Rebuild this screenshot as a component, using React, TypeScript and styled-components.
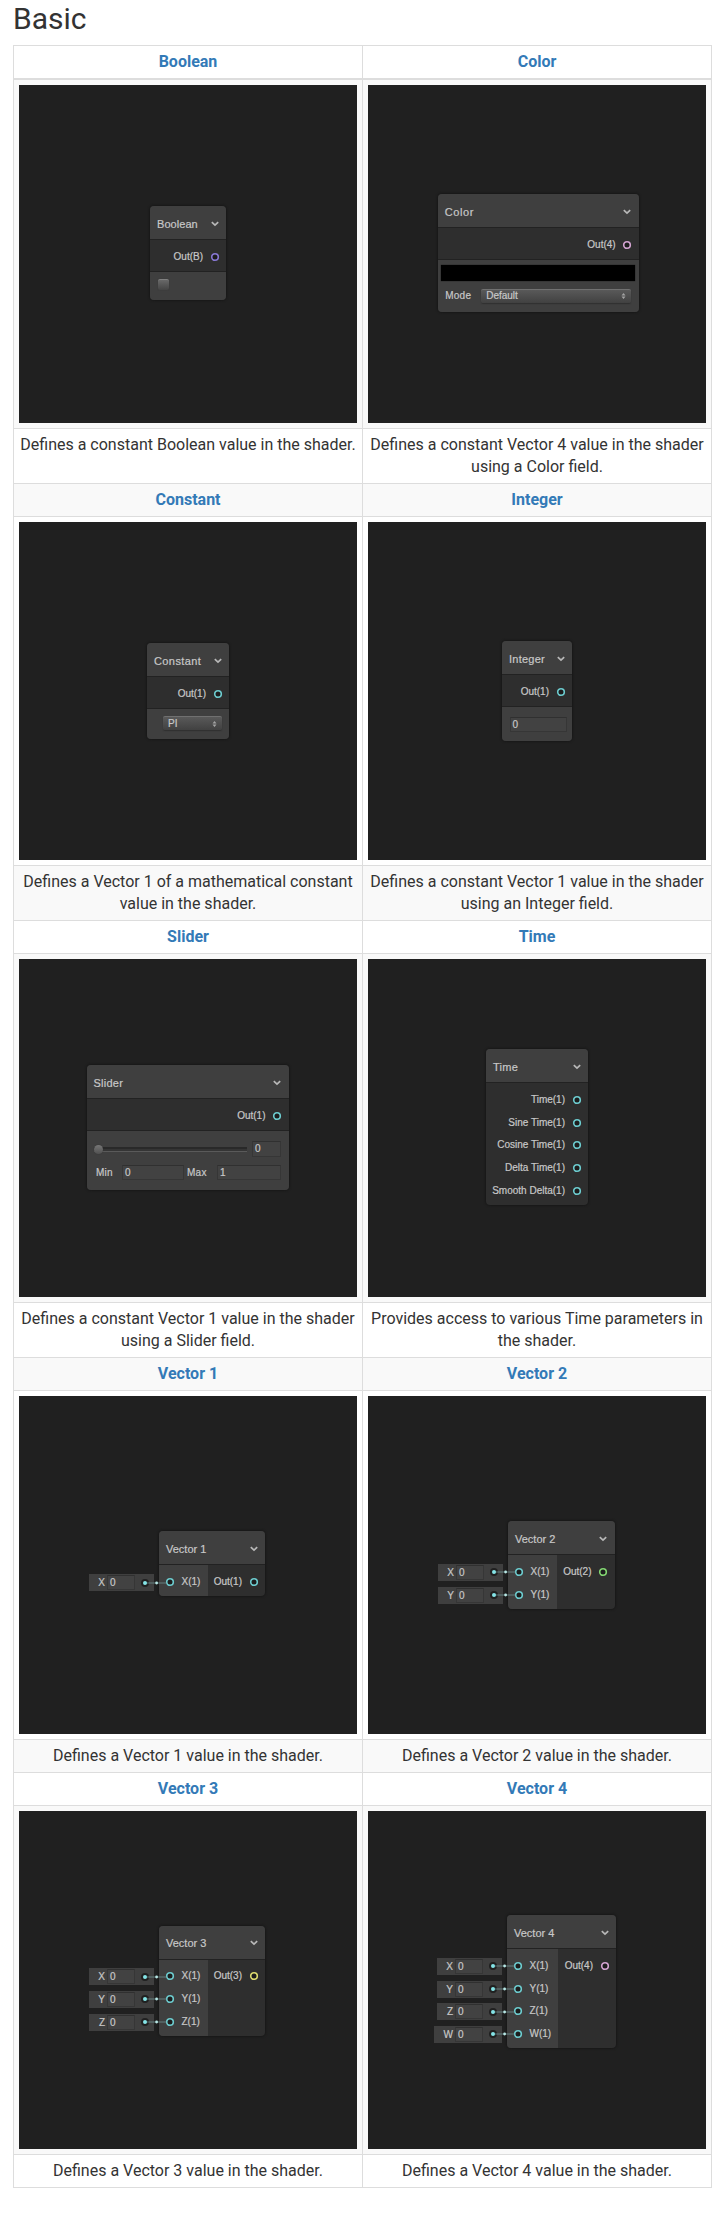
import React from "react";
import styled, { createGlobalStyle } from "styled-components";

const GlobalStyle = createGlobalStyle`
  * { box-sizing: border-box; }
  body {
    margin: 0;
    background: #fff;
    color: #333;
    font: 400 16px/22px Roboto, "Liberation Sans", sans-serif;
  }
`;

const Page = styled.main`
  width: 724px;
  height: 2214px;
  padding: 2px 12px 0 13px;
`;

const Heading = styled.h2`
  margin: 0 0 10px;
  font-size: 30px;
  font-weight: 400;
  line-height: 33px;
`;

const Gallery = styled.div`
  border: solid #ddd;
  border-width: 0 1px 1px 0;
`;

const Row = styled.div<{ $shaded?: boolean }>`
  display: grid;
  grid-template-columns: 1fr 1fr;
  background: ${(p) => (p.$shaded ? "#f9f9f9" : "#fff")};
`;

const Cell = styled.div<{ $thick?: boolean }>`
  padding: 5px;
  border-left: 1px solid #ddd;
  border-top: ${(p) => (p.$thick ? 2 : 1)}px solid #ddd;
  text-align: center;
`;

const NodeLink = styled.a`
  color: #337ab7;
  font-weight: 700;
  text-decoration: none;
`;

const Canvas = styled.div`
  position: relative;
  width: 338px;
  height: 338px;
  background: #202020;
  color: #c8c8c8;
  font: 10px/12px "Liberation Sans", Arial, sans-serif;
  -webkit-text-stroke: 0.2px #c8c8c8;
  text-align: left;
  white-space: nowrap;
`;

const Node = styled.div<{ $x: number; $y: number; $w: number }>`
  position: absolute;
  left: ${(p) => p.$x}px;
  top: ${(p) => p.$y}px;
  width: ${(p) => p.$w}px;
  border-radius: 4px;
  background: #2e2e2e;
  box-shadow: 0 0 2px 1px #181818;
`;

const NodeHeader = styled.div<{ $tracking: number }>`
  display: flex;
  align-items: center;
  justify-content: space-between;
  height: 34px;
  padding: 2px 7.5px 0 7px;
  border-bottom: 1px solid #222;
  border-radius: 4px 4px 0 0;
  background: #3f3f3f;
  font-size: 11px;
  letter-spacing: ${(p) => p.$tracking}px;
`;

const Ports = styled.div`
  display: flex;
`;

const Inputs = styled.div<{ $w: number }>`
  width: ${(p) => p.$w}px;
  padding: 5.3px 0 2.7px 7px;
  background: #3f3f3f;
  border-radius: 0 0 0 4px;
`;

const Outputs = styled.div`
  flex: 1;
  padding: 5.3px 7.5px 2.7px 0;
`;

const Port = styled.div<{ $out?: boolean }>`
  display: flex;
  align-items: center;
  justify-content: ${(p) => (p.$out ? "flex-end" : "flex-start")};
  gap: 7.5px;
  height: 22.7px;
`;

const RingArt = styled.svg`
  display: block;
  flex: none;
  width: 8px;
  height: 8px;
  overflow: visible;
`;

const Settings = styled.div<{ $h: number; $pad: string }>`
  height: ${(p) => p.$h}px;
  padding: ${(p) => p.$pad};
  border-top: 1px solid #222;
  border-radius: 0 0 4px 4px;
  background: #3f3f3f;
`;

const Line = styled.div<{ $gap?: number; $mt?: number; $pl?: number }>`
  display: flex;
  align-items: center;
  gap: ${(p) => p.$gap ?? 0}px;
  margin-top: ${(p) => p.$mt ?? 0}px;
  padding-left: ${(p) => p.$pl ?? 0}px;
`;

const FieldLabel = styled.span<{ $w: number }>`
  width: ${(p) => p.$w}px;
  letter-spacing: 0.25px;
`;

const Field = styled.div<{ $w: number; $h?: number }>`
  width: ${(p) => p.$w}px;
  height: ${(p) => p.$h ?? 15}px;
  padding-left: 2px;
  border: 1px solid #363636;
  border-top-color: #303030;
  background: #424242;
  line-height: 13px;
`;

const Checkbox = styled.div`
  width: 11px;
  height: 11px;
  border-radius: 2px;
  border-top: 1px solid #808080;
  background: linear-gradient(#686868, #444);
  box-shadow: 0 0 1px #333;
`;

const Swatch = styled.div`
  height: 16px;
  background: #000;
  box-shadow: 0 0 1px #111;
`;

const Select = styled.div<{ $w: number }>`
  display: flex;
  align-items: center;
  justify-content: space-between;
  width: ${(p) => p.$w}px;
  height: 14px;
  padding: 0 5px;
  border-top: 1px solid #707070;
  border-radius: 2px;
  background: linear-gradient(#595959, #414141);
  box-shadow: 0 1px 1px #303030;
`;

const Track = styled.div`
  display: flex;
  align-items: center;
  width: 153px;
  height: 5px;
  border: solid;
  border-width: 2px 0 1px;
  border-color: #292929 #000 #5a5a5a;
  background: #353535;
`;

const Thumb = styled.i`
  width: 9px;
  height: 9px;
  flex: none;
  border-radius: 50%;
  background: linear-gradient(#777, #505050);
  box-shadow: 0 0 1px #333;
`;

const Defaults = styled.div<{ $right: number }>`
  position: absolute;
  z-index: 1;
  top: 39.8px;
  right: ${(p) => p.$right}px;
  display: flex;
  flex-direction: column;
  align-items: flex-end;
`;

const DefaultSlot = styled.div`
  display: flex;
  align-items: center;
  height: 22.7px;
`;

const DefaultValue = styled.div<{ $w: number }>`
  display: flex;
  align-items: center;
  justify-content: flex-end;
  width: ${(p) => p.$w}px;
  height: 17px;
  background: #3f3f3f;
`;

const Letter = styled.span`
  margin-right: 2px;
  padding-top: 1px;
`;

const WireArt = styled.svg`
  display: block;
  flex: none;
  width: 14px;
  height: 10px;
  margin-left: 5px;
  overflow: visible;
`;

const Ring = ({ color }: { color: string }) => (
  <RingArt viewBox="0 0 8 8">
    <circle cx="4" cy="4" r="3.3" fill="#1d1d1d" stroke={color} strokeWidth="1.6" />
  </RingArt>
);

const Chevron = () => (
  <svg width="8" height="6" viewBox="0 0 8 6" fill="none">
    <path d="M0.8 1.2 4 4.2 7.2 1.2" stroke="#b8b8b8" strokeWidth="1.7" />
  </svg>
);

const UpDown = () => (
  <svg width="5" height="8" viewBox="0 0 5 8" fill="#a4a4a4">
    <path d="M2.5 1 4.5 3.6h-4zM2.5 7 .5 4.4h4z" />
  </svg>
);

const Wire = () => (
  <WireArt viewBox="0 0 14 10">
    <circle cx="5" cy="5" r="4" fill="#202020" />
    <path d="M5 5H26.5" stroke="#7aa3a3" strokeOpacity="0.65" />
    <circle cx="5" cy="5" r="2" fill="#84e4e7" />
    <circle cx="16.6" cy="5" r="1.4" fill="#b9e8e6" />
  </WireArt>
);

const CYAN = "#6dcdd0";

type NodeSpec = {
  name: string;
  text: string;
  x: number;
  y: number;
  w: number;
  tracking?: number;
  outputs: string[];
  color?: string;
  inputs?: string[];
  inputWidth?: number;
  settings?: React.ReactNode;
};

const booleanSettings = (
  <Settings $h={29} $pad="7px 0 0 8px">
    <Checkbox />
  </Settings>
);

const colorSettings = (
  <Settings $h={52.5} $pad="5px 3.5px 0">
    <Swatch />
    <Line $mt={7.5} $pl={4}>
      <FieldLabel $w={36}>Mode</FieldLabel>
      <Select $w={149.5}>Default<UpDown /></Select>
    </Line>
  </Settings>
);

const constantSettings = (
  <Settings $h={31} $pad="7.5px 0 0 16px">
    <Select $w={59}>PI<UpDown /></Select>
  </Settings>
);

const integerSettings = (
  <Settings $h={35} $pad="10px 0 0 7.5px">
    <Field $w={57}>0</Field>
  </Settings>
);

const sliderSettings = (
  <Settings $h={60} $pad="10px 0 0 7.5px">
    <Line $gap={5}>
      <Track><Thumb /></Track>
      <Field $w={29} $h={16}>0</Field>
    </Line>
    <Line $mt={8} $pl={2}>
      <FieldLabel $w={26}>Min</FieldLabel>
      <Field $w={62}>0</Field>
      <Line $pl={3}>
        <FieldLabel $w={30}>Max</FieldLabel>
        <Field $w={64}>1</Field>
      </Line>
    </Line>
  </Settings>
);

const nodes: NodeSpec[] = [
  { name: "Boolean", text: "Defines a constant Boolean value in the shader.", x: 131, y: 121.4, w: 76, tracking: 0.05, outputs: ["Out(B)"], color: "#8878d4", settings: booleanSettings },
  { name: "Color", text: "Defines a constant Vector 4 value in the shader using a Color field.", x: 69.7, y: 109.4, w: 201, tracking: 0.6, outputs: ["Out(4)"], color: "#d4a4d2", settings: colorSettings },
  { name: "Constant", text: "Defines a Vector 1 of a mathematical constant value in the shader.", x: 128, y: 121, w: 82, tracking: 0.4, outputs: ["Out(1)"], settings: constantSettings },
  { name: "Integer", text: "Defines a constant Vector 1 value in the shader using an Integer field.", x: 134, y: 119, w: 70, tracking: 0.25, outputs: ["Out(1)"], settings: integerSettings },
  { name: "Slider", text: "Defines a constant Vector 1 value in the shader using a Slider field.", x: 67.5, y: 106.4, w: 202, tracking: 0.25, outputs: ["Out(1)"], settings: sliderSettings },
  { name: "Time", text: "Provides access to various Time parameters in the shader.", x: 118, y: 90.3, w: 102, tracking: 0.3, outputs: ["Time(1)", "Sine Time(1)", "Cosine Time(1)", "Delta Time(1)", "Smooth Delta(1)"] },
  { name: "Vector 1", text: "Defines a Vector 1 value in the shader.", x: 140, y: 135.4, w: 106, outputs: ["Out(1)"], inputs: ["X"] },
  { name: "Vector 2", text: "Defines a Vector 2 value in the shader.", x: 140, y: 125.2, w: 106.5, outputs: ["Out(2)"], color: "#84d873", inputs: ["X", "Y"] },
  { name: "Vector 3", text: "Defines a Vector 3 value in the shader.", x: 140, y: 114.6, w: 106, outputs: ["Out(3)"], color: "#dddc70", inputs: ["X", "Y", "Z"] },
  { name: "Vector 4", text: "Defines a Vector 4 value in the shader.", x: 139, y: 104.2, w: 109, outputs: ["Out(4)"], color: "#d4a4d2", inputs: ["X", "Y", "Z", "W"], inputWidth: 51 },
];

const GraphNode = ({ spec }: { spec: NodeSpec }) => (
  <Canvas>
    <Node $x={spec.x} $y={spec.y} $w={spec.w}>
      <NodeHeader $tracking={spec.tracking ?? 0}>
        {spec.name}
        <Chevron />
      </NodeHeader>
      <Ports>
        {spec.inputs && (
          <Inputs $w={spec.inputWidth ?? 49}>
            {spec.inputs.map((axis) => (
              <Port key={axis}><Ring color={CYAN} />{axis}(1)</Port>
            ))}
          </Inputs>
        )}
        <Outputs>
          {spec.outputs.map((label) => (
            <Port key={label} $out>{label}<Ring color={spec.color ?? CYAN} /></Port>
          ))}
        </Outputs>
      </Ports>
      {spec.settings}
      {spec.inputs && (
        <Defaults $right={spec.w + 5}>
          {spec.inputs.map((axis) => (
            <DefaultSlot key={axis}>
              <DefaultValue $w={axis === "W" ? 68 : 65}>
                <Letter>{axis}</Letter>
                <Field $w={28}>0</Field>
                <Wire />
              </DefaultValue>
            </DefaultSlot>
          ))}
        </Defaults>
      )}
    </Node>
  </Canvas>
);

const pairs = Array.from({ length: nodes.length / 2 }, (_, i) => nodes.slice(i * 2, i * 2 + 2));

export default function App() {
  return (
    <Page>
      <GlobalStyle />
      <Heading>Basic</Heading>
      <Gallery>
        {pairs.map((pair, i) => (
          <React.Fragment key={i}>
            <Row $shaded={i % 2 === 1}>
              {pair.map((n) => (
                <Cell key={n.name}><NodeLink>{n.name}</NodeLink></Cell>
              ))}
            </Row>
            <Row $shaded={i % 2 === 0}>
              {pair.map((n) => (
                <Cell key={n.name} $thick={i === 0}><GraphNode spec={n} /></Cell>
              ))}
            </Row>
            <Row $shaded={i % 2 === 1}>
              {pair.map((n) => (
                <Cell key={n.name}>{n.text}</Cell>
              ))}
            </Row>
          </React.Fragment>
        ))}
      </Gallery>
    </Page>
  );
}
